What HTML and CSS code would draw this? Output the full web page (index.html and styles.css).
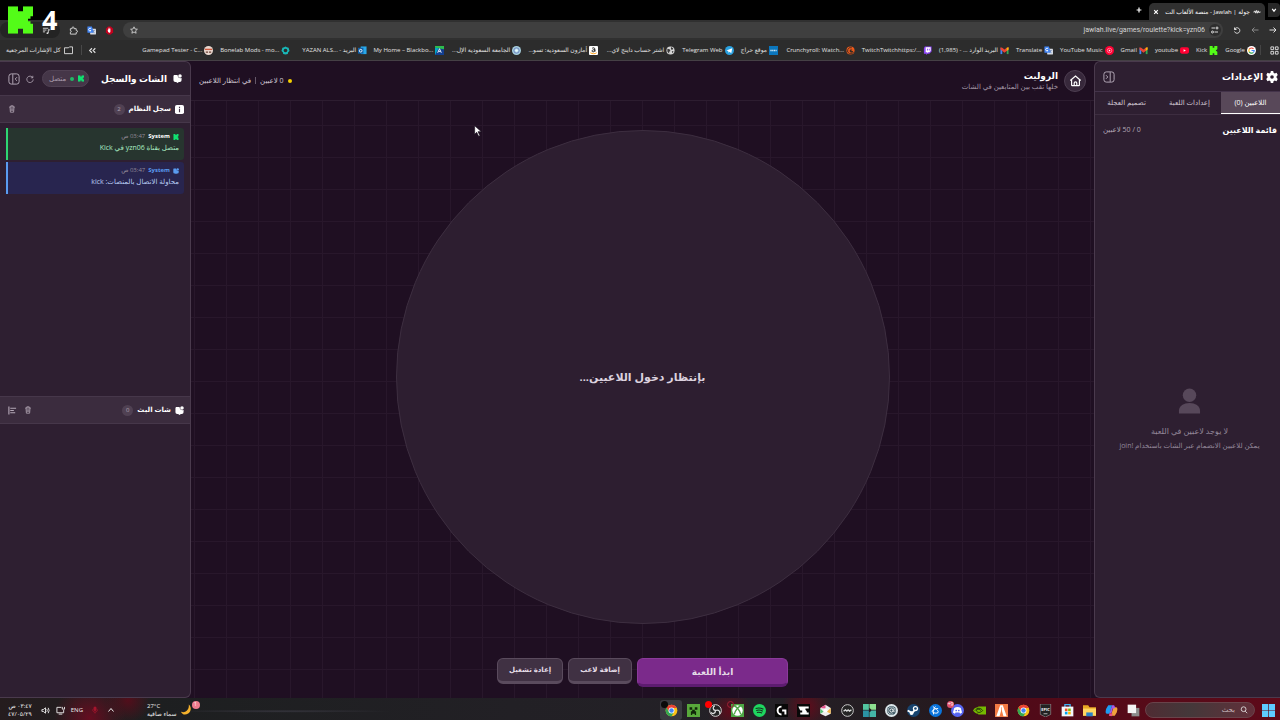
FILE: index.html
```html
<!DOCTYPE html>
<html lang="ar" dir="rtl">
<head>
    <meta charset="UTF-8">
    <meta name="viewport" content="width=device-width, initial-scale=1.0">
    <title>جولة | Jawlah</title>
    <link rel="stylesheet" href="styles.css">
</head>
<body>
    <svg class="sprite" aria-hidden="true">
        <symbol id="kick" viewBox="0 0 10 11"><path d="M0 0h4v2h2V0h4v4H9v1H8v1h1v1h1v4H6V9H4v2H0z"/></symbol>
        <symbol id="chat" viewBox="0 0 20 20"><path d="M2 2h8c1 6 4 8 9 7v5a4 4 0 0 1-4 4h-2l-3 2-3-2H5a4 4 0 0 1-4-4V5z"/><circle cx="15.500" cy="4.500" r="4"/></symbol>
        <symbol id="trash" viewBox="0 0 20 20"><path d="M3 5h14M7 5V2h6v3M5 5l1 13h8l1-13M8 8v7M12 8v7" fill="none" stroke="currentColor" stroke-width="2"/></symbol>
        <symbol id="gmail" viewBox="0 0 20 20"><path fill="#4285f4" d="M1 5h4v13H1z"/><path fill="#34a853" d="M15 5h4v13h-4z"/><path fill="#ea4335" d="M1 3l4 1 5 4 5-4 4-1v5l-9 7-9-7z"/><path fill="#fbbc04" d="M15 4l4-1v5l-4 3z"/></symbol>
        <symbol id="translate" viewBox="0 0 20 20"><rect x="7" y="6" width="13" height="13" rx="1" fill="#d5dae3"/><path fill="#4285f4" d="M1 1h10l4 14H1z"/><path d="M9 6a3 3 0 1 0 0 4H7" fill="none" stroke="#fff" stroke-width="2"/><path d="M12 10h6M15 9c0 3-1 5-3 6m1-4 4 5" stroke="#5876ad" fill="none"/></symbol>
        <symbol id="chrome" viewBox="0 0 20 20"><circle cx="10" cy="10" r="9" fill="#fbc116"/><path fill="#ea4335" d="M2.200 5.500A9 9 0 0 1 18 6H10L6 12z"/><path fill="#34a853" d="M2.200 5.500A9 9 0 0 0 10 19l4-7H6z"/><circle cx="10" cy="10" r="4.500" fill="#fff"/><circle cx="10" cy="10" r="3.400" fill="#4285f4"/></symbol>
        <symbol id="collapse" viewBox="0 0 20 20"><g fill="none" stroke="currentColor" stroke-width="1.600"><rect x="1.500" y="1.500" width="17" height="17" rx="4"/><path d="M12 2v16M5 7l3 3-3 3"/></g></symbol>
    </svg>

    <!-- شريط التبويبات -->
    <div class="tab-strip">
        <button class="tab-list" aria-label="التبويبات"><svg class="icon-xs" viewBox="0 0 10 10"><path d="M2 3l3 4 3-4" class="line"/></svg></button>
        <div class="browser-tab">
            <svg class="icon-s" viewBox="0 0 20 20"><path d="M1 10h3l1-3 2 6 2-7 2 7 2-6 2 5 1-2h3" class="line"/></svg>
            <span class="tab-title">جولة | Jawlah - منصة الألعاب الت</span>
            <button class="tab-close" aria-label="إغلاق"><svg class="icon-xs" viewBox="0 0 10 10"><path d="M2 2l6 6M8 2l-6 6" class="line"/></svg></button>
        </div>
        <button class="tab-new" aria-label="تبويب جديد"><svg class="icon-xs" viewBox="0 0 10 10"><path d="M5 1v8M1 5h8" class="line"/></svg></button>
    </div>

    <!-- شريط العنوان -->
    <div class="toolbar">
        <div class="nav">
            <button aria-label="رجوع"><svg class="icon-s" viewBox="0 0 16 16"><path d="M1 8h13M9 3l5 5-5 5" class="line"/></svg></button>
            <button class="dim" aria-label="تقدم"><svg class="icon-s" viewBox="0 0 16 16"><path d="M15 8H2M7 3L2 8l5 5" class="line"/></svg></button>
            <button aria-label="تحديث"><svg class="icon-s" viewBox="0 0 16 16"><path d="M3 3v4h4M3 7a5.500 5.500 0 1 1 0 4" class="line"/></svg></button>
        </div>
        <div class="address">
            <span class="site-info"><svg class="icon-s" viewBox="0 0 16 16"><path d="M1 4h7M14 12H7" class="line"/><circle cx="12" cy="4" r="2" class="line"/><circle cx="3" cy="12" r="2" class="line"/></svg></span>
            <input type="text" dir="ltr" aria-label="العنوان" value="jawlah.live/games/roulette?kick=yzn06">
            <button aria-label="إشارة"><svg class="icon-s" viewBox="0 0 20 20"><path d="M10 2l2.500 5.500 6 .6-4.500 4 1.300 6L10 15l-5.300 3.100 1.300-6-4.500-4 6-.6z" class="line"/></svg></button>
        </div>
        <div class="extensions">
            <svg class="icon-m" viewBox="0 0 20 20"><path d="M7 1h6l5 5v8l-5 5H7l-5-5V6z" fill="#c4001d"/><path d="M6 10l1-4 1 3V4h1v4l1-5 1 5 1-4v8c0 4-5 4-6-2z" fill="#fff"/></svg>
            <svg class="icon-m"><use href="#translate"/></svg>
            <svg class="icon-m" viewBox="0 0 20 20"><path d="M3 6h4V4a2 2 0 0 1 4 0v2h5v4h1a2 2 0 0 1 0 4h-1v4H3v-4a2 2 0 0 0 0-4z" class="line"/></svg>
            <span class="media-pill"><svg class="icon-m" viewBox="0 0 20 20"><path d="M2 5h12M2 9h8M2 13h5M14 8v8M14 8l4 1" class="line"/><circle cx="12" cy="16" r="2" fill="#ddd"/></svg></span>
        </div>
    </div>

    <!-- الإشارات المرجعية -->
    <nav class="bookmarks">
        <svg class="apps" viewBox="0 0 20 20"><g class="line"><path d="M2 2h6v6H2zM12 2h6v6h-6zM2 12h6v6H2zM12 12h6v6h-6z"/></g></svg>
        <a href="#" class="bookmark first"><svg viewBox="0 0 20 20"><circle cx="10" cy="10" r="10" fill="#fff"/><g fill="none" stroke-width="2.500"><path d="M14.500 6.500A6 6 0 0 0 5 7" stroke="#ea4335"/><path d="M5 7a6 6 0 0 0 0 6" stroke="#fbbc04"/><path d="M5 13a6 6 0 0 0 9 1.500" stroke="#34a853"/><path d="M14 14.500A6 6 0 0 0 16 10h-6" stroke="#4285f4"/></g></svg><span>Google</span></a>
        <a href="#" class="bookmark"><svg class="kick-green" viewBox="0 0 10 11"><use href="#kick"/></svg><span>Kick</span></a>
        <a href="#" class="bookmark"><svg viewBox="0 0 20 20"><rect y="3" width="20" height="14" rx="4" fill="#f03"/><path d="M8 7v6l5-3z" fill="#fff"/></svg><span>youtube</span></a>
        <a href="#" class="bookmark"><svg><use href="#gmail"/></svg><span>Gmail</span></a>
        <a href="#" class="bookmark"><svg viewBox="0 0 20 20"><circle cx="10" cy="10" r="10" fill="#f03"/><circle cx="10" cy="10" r="5" fill="none" stroke="#fff"/><path d="M8.500 7.500v5l4-2.500z" fill="#fff"/></svg><span>YouTube Music</span></a>
        <a href="#" class="bookmark"><svg><use href="#translate"/></svg><span>Translate</span></a>
        <a href="#" class="bookmark wide"><svg><use href="#gmail"/></svg><span>البريد الوارد ... - (1,985)</span></a>
        <a href="#" class="bookmark wide"><svg viewBox="0 0 20 20"><path d="M4 1h15v11l-5 5h-4l-3 3v-3H2V5z" fill="#8c45f7"/><path d="M6 3h11v8l-3 3h-3l-2 2v-2H6z" fill="#fff"/><path d="M10 6v4M14 6v4" stroke="#8c45f7" stroke-width="2"/></svg><span dir="ltr">TwitchTwitchhttps:/...</span></a>
        <a href="#" class="bookmark wide"><svg viewBox="0 0 20 20"><circle cx="10" cy="10" r="9" fill="#f05a1a"/><path d="M17 13a7 7 0 1 1-4-9" fill="none" stroke="#3a2a22" stroke-width="2"/><circle cx="12" cy="11" r="4" fill="#3a2a22"/><circle cx="14" cy="9" r="2" fill="#f05a1a"/></svg><span dir="ltr">Crunchyroll: Watch...</span></a>
        <a href="#" class="bookmark"><svg viewBox="0 0 20 20"><path fill="#0b76bd" d="M0 0h20v20H0z"/><path d="M3 10h14" stroke="#cde6f5" stroke-width="3" stroke-dasharray="3 1"/></svg><span>موقع حراج</span></a>
        <a href="#" class="bookmark"><svg viewBox="0 0 20 20"><circle cx="10" cy="10" r="10" fill="#2aa1e0"/><path d="M3 10l13-5-2 11-4-3-2 2-1-4z" fill="#fff"/></svg><span>Telegram Web</span></a>
        <a href="#" class="bookmark wide"><svg viewBox="0 0 20 20"><circle cx="10" cy="10" r="9" fill="#d6d6d6"/><path d="M3 6l5 1 2 4-3 2v4l-4-5zM11 2l5 3-2 4-3-2zM13 11l4 1-3 4z" fill="#393939"/></svg><span>اشتر حساب داينج لاي...</span></a>
        <a href="#" class="bookmark wide"><svg viewBox="0 0 20 20"><rect width="20" height="20" rx="2" fill="#fff"/><path d="M7 5c3-2 6-1 6 2v6M13 8c-8 0-7 5-4 5 2 0 4-2 4-4" fill="none" stroke="#111" stroke-width="2"/><path d="M3 15c5 3 10 3 14 0" stroke="#f90" stroke-width="2" fill="none"/></svg><span>أمازون السعودية: تسو...</span></a>
        <a href="#" class="bookmark wide"><svg viewBox="0 0 20 20"><circle cx="10" cy="10" r="10" fill="#a7d0de"/><circle cx="10" cy="10" r="6" fill="none" stroke="#6c7dc0" stroke-width="2"/><circle cx="10" cy="10" r="3" fill="#e9fbff"/></svg><span>الجامعة السعودية الإل...</span></a>
        <a href="#" class="bookmark wide"><svg viewBox="0 0 20 20"><path fill="#123e8f" d="M0 0h20v20H0z"/><path fill="#2dbd4e" d="M0 0h20v7L0 4z"/><path fill="#00a7c7" d="M0 4l8 1-8 15z"/><path d="M6 15l4-9 4 9M8 12h4" stroke="#fff" stroke-width="2" fill="none"/></svg><span dir="ltr">My Home – Blackbo...</span></a>
        <a href="#" class="bookmark wide"><svg viewBox="0 0 20 20"><path fill="#28a8ea" d="M6 1h13v17H6z"/><path fill="#0f5fa8" d="M0 4h12v13H0z"/><circle cx="6" cy="10.500" r="3" fill="none" stroke="#fff" stroke-width="2"/></svg><span>البريد - <bdi dir="ltr">YAZAN ALS...</bdi></span></a>
        <a href="#" class="bookmark wide"><svg viewBox="0 0 20 20"><path d="M10 1l3 2 4 1 1 4 1 3-3 3-1 4-5 1-5-1-1-4-3-3 1-3 1-4 4-1z" fill="#19b7b7"/><circle cx="10" cy="10" r="4" fill="#2c2c2c"/></svg><span dir="ltr">Bonelab Mods - mo...</span></a>
        <a href="#" class="bookmark wide"><svg viewBox="0 0 20 20"><circle cx="10" cy="10" r="10" fill="#e9d8cf"/><path d="M2 6h16v3H2z" fill="#cf5b3f"/><path d="M4 12h5v3H4zM11 12h5v3h-5z" fill="#6b4035"/></svg><span dir="ltr">Gamepad Tester - C...</span></a>
        <div class="bookmarks-end">
            <button class="more" aria-label="المزيد"><svg class="icon-s" viewBox="0 0 16 16"><path d="M7 4L3 8l4 4M13 4L9 8l4 4" class="line"/></svg></button>
            <a href="#" class="all-bookmarks"><svg viewBox="0 0 20 20"><path d="M1 4h9l2-2h7v15H1z" class="line"/></svg><span>كل الإشارات المرجعية</span></a>
        </div>
    </nav>

    <main class="game">
        <!-- الإعدادات -->
        <aside class="panel settings">
            <header class="settings-head">
                <svg class="icon-l" viewBox="0 0 20 20"><path fill="#fff" d="M8 0h4l.6 3 2 1 3-1 2 3.500L17.500 9v2l2 2.500-2 3.500-3-1-2 1-.5 3H8l-.6-3-2-1-3 1-2-3.500L2.500 11V9l-2-2.500 2-3.500 3 1 2-1z"/><circle cx="10" cy="10" r="3" fill="#2e1f31"/></svg>
                <h2>الإعدادات</h2>
                <button class="icon-btn push" aria-label="طي"><svg class="icon-l"><use href="#collapse"/></svg></button>
            </header>
            <div class="tabs">
                <button class="tab active">اللاعبين (0)</button>
                <button class="tab">إعدادات اللعبة</button>
                <button class="tab">تصميم العجلة</button>
            </div>
            <div class="players-head">
                <h3>قائمة اللاعبين</h3>
                <span class="count">0 / 50 لاعبين</span>
            </div>
            <div class="empty">
                <svg viewBox="0 0 24 26"><circle cx="12" cy="7" r="7"/><path d="M1 26v-3c0-5 5-8 11-8s11 3 11 8v3z"/></svg>
                <p>لا يوجد لاعبين في اللعبة</p>
                <p class="hint">يمكن للاعبين الانضمام عبر الشات باستخدام <bdi>join!</bdi></p>
            </div>
        </aside>

        <!-- العجلة -->
        <section class="board">
            <header class="board-head">
                <button class="home" aria-label="الرئيسية"><svg viewBox="0 0 20 20"><path d="M2 10l8-7 8 7M4 9v8a1 1 0 0 0 1 1h10a1 1 0 0 0 1-1V9M8 18v-4a2 2 0 0 1 4 0v4" fill="none" stroke="#fff" stroke-width="1.800"/></svg></button>
                <div class="board-title">
                    <h1>الروليت</h1>
                    <p>خلها تقب بين المتابعين في الشات</p>
                </div>
                <div class="board-status">
                    <span class="dot yellow"></span>
                    <span>0 لاعبين</span>
                    <span class="sep"></span>
                    <span>في انتظار اللاعبين</span>
                </div>
            </header>
            <div class="stage">
                <div class="wheel">بإنتظار دخول اللاعبين...</div>
            </div>
            <div class="actions">
                <button class="btn btn-start">ابدأ اللعبة</button>
                <button class="btn">إضافة لاعب</button>
                <button class="btn">إعادة تشغيل</button>
            </div>
        </section>

        <!-- الشات والسجل -->
        <aside class="panel chat">
            <header class="chat-head">
                <svg class="icon-m white"><use href="#chat"/></svg>
                <h2>الشات والسجل</h2>
                <span class="status-pill"><svg class="green" viewBox="0 0 10 11"><use href="#kick"/></svg><span class="dot green-dot"></span>متصل</span>
                <button class="icon-btn" aria-label="تحديث"><svg class="icon-s" viewBox="0 0 20 20"><path d="M17 2v5h-5M17 7a8 8 0 1 0 1 4" class="line"/></svg></button>
                <button class="icon-btn" aria-label="طي"><svg class="icon-l flip"><use href="#collapse"/></svg></button>
            </header>
            <div class="sub-head">
                <svg class="icon-m" viewBox="0 0 20 20"><rect width="20" height="20" rx="4" fill="#fff"/><path d="M10 4v3M10 9v7" stroke="#4a3a4c" stroke-width="2.500"/></svg>
                <h3>سجل النظام</h3>
                <span class="badge">2</span>
                <button class="icon-btn push" aria-label="مسح السجل"><svg class="icon-s"><use href="#trash"/></svg></button>
            </div>
            <div class="log">
                <article class="entry success">
                    <div class="meta"><svg viewBox="0 0 10 11"><use href="#kick"/></svg><b>System</b><time>03:47 ص</time></div>
                    <p>متصل بقناة yzn06 في Kick</p>
                </article>
                <article class="entry info">
                    <div class="meta"><svg viewBox="0 0 20 20"><use href="#chat"/></svg><b>System</b><time>03:47 ص</time></div>
                    <p>محاولة الاتصال بالمنصات: kick</p>
                </article>
            </div>
            <div class="sub-head">
                <svg class="icon-m white"><use href="#chat"/></svg>
                <h3>شات البث</h3>
                <span class="badge">0</span>
                <button class="icon-btn push" aria-label="مسح الشات"><svg class="icon-s"><use href="#trash"/></svg></button>
                <button class="icon-btn" aria-label="محاذاة"><svg class="icon-m" viewBox="0 0 20 20"><path d="M2 1v18M5 5h13M5 10h8M5 15h11" stroke="currentColor" stroke-width="2.500"/></svg></button>
            </div>
            <div class="log"></div>
        </aside>
    </main>

    <!-- شريط المهام -->
    <footer class="taskbar">
        <button class="app" aria-label="ابدأ"><svg viewBox="0 0 20 20"><path fill="#5ecbff" d="M0 0h9.500v9.500H0zM10.500 0H20v9.500h-9.500zM0 10.500h9.500V20H0zM10.500 10.500H20V20h-9.500z"/></svg></button>
        <label class="search"><svg class="icon-s" viewBox="0 0 20 20"><circle cx="9" cy="8" r="6" class="line"/><path d="M13 13l5 5" class="line"/></svg><input type="text" placeholder="بحث" aria-label="بحث"></label>
        <button class="app" aria-label="عرض المهام"><svg viewBox="0 0 20 20"><path fill="#8b8b8b" d="M7 6h12v13H7z"/><path fill="#f4f4f4" d="M1 1h13v13H1z"/></svg></button>
        <button class="app" aria-label="Copilot"><svg viewBox="0 0 20 20"><path fill="#1e9bf0" d="M5 2h6l-4 13H3c-3 0-2-5-1-8z"/><path fill="#f2a33c" d="M15 18H9l4-13h4c3 0 2 5 1 8z"/><path fill="#a45bea" d="M11 2h3l2 4-4 1-2 7H7z"/><path fill="#e8508c" d="M7 14l5 1-2 4-4-1z"/></svg></button>
        <button class="app" aria-label="الملفات"><svg viewBox="0 0 20 20"><path fill="#e9a824" d="M0 2h8l2 3h10v13H0z"/><path fill="#ffd762" d="M0 7h20v11H0z"/><path fill="#2a82c9" d="M5 13h10v6H5z"/></svg></button>
        <button class="app" aria-label="المتجر"><svg viewBox="0 0 20 20"><path d="M6 5V1h8v4" fill="none" stroke="#3eb2f2" stroke-width="2"/><path fill="#f2f7fa" d="M1 4h18v15H1z"/><path fill="#f25022" d="M6 7h4v4H6z"/><path fill="#7fba00" d="M11 7h4v4h-4z"/><path fill="#00a4ef" d="M6 12h4v4H6z"/><path fill="#ffb900" d="M11 12h4v4h-4z"/></svg></button>
        <button class="app" aria-label="Epic Games"><svg viewBox="0 0 20 20"><path fill="#222" stroke="#ddd" stroke-width=".6" d="M2 0h16v16l-8 4-8-4z"/><text x="10" y="10" text-anchor="middle" class="epic">EPIC</text><path d="M7 15h6" stroke="#fff"/></svg></button>
        <button class="app" aria-label="Chrome"><svg><use href="#chrome"/></svg></button>
        <button class="app" aria-label="FiveM"><svg viewBox="0 0 20 20"><path fill="#f47b45" d="M0 0h20v20H0z"/><path fill="#fff" d="M8 2h4l6 17h-5L10 8l-3 11H2z"/><path d="M10 5v12" stroke="#f47b45"/></svg></button>
        <button class="app" aria-label="NVIDIA"><svg viewBox="0 0 20 20"><path fill="#76b900" d="M8 4h12v12H8zM0 10c3-5 6-5 8-5v10c-4 0-6-2-8-5z"/><path d="M3 10c4-5 9-4 12 0-4 4-8 4-10 0 3-3 5-2 7 0" fill="none" stroke="#243b09" stroke-width="1.500"/></svg></button>
        <button class="app" aria-label="Discord"><svg viewBox="0 0 20 20"><circle cx="10" cy="10" r="10" fill="#5865f2"/><path fill="#fff" d="M5 6c3-2 7-2 10 0l2 7-3 2-1-2H7l-1 2-3-2z"/><circle cx="8" cy="10" r="1.300" fill="#5865f2"/><circle cx="12" cy="10" r="1.300" fill="#5865f2"/></svg><span class="alert">9+</span></button>
        <button class="app" aria-label="Battle.net"><svg viewBox="0 0 20 20"><circle cx="10" cy="10" r="10" fill="#0a74dc"/><path d="M6 4c6 4 9 7 8 9s-8 1-9-1 3-5 9-5M7 16c-1-6 1-11 3-12" fill="none" stroke="#fff" stroke-width="1.500"/></svg></button>
        <button class="app" aria-label="Steam"><svg viewBox="0 0 20 20"><circle cx="10" cy="10" r="10" fill="#17436e"/><path d="M1 10l7 4 5-6" stroke="#fff" stroke-width="3" fill="none"/><circle cx="13" cy="7" r="4" fill="#fff"/><circle cx="13" cy="7" r="2" fill="#17436e"/><circle cx="7" cy="14" r="3" fill="#fff"/></svg></button>
        <button class="app" aria-label="البريد"><svg viewBox="0 0 20 20"><circle cx="10" cy="10" r="10" fill="#dce6ea"/><circle cx="10" cy="10" r="7" fill="#34505d"/><circle cx="10" cy="10" r="2.500" fill="none" stroke="#fff" stroke-width="1.500"/><path d="M12.500 7v4c1 3 3 1 3-1a5.500 5.500 0 1 0-3 5" fill="none" stroke="#fff"/></svg></button>
        <button class="app" aria-label="الأدوات"><svg viewBox="0 0 20 20"><path fill="#52c6a0" d="M0 0h9v9H0z"/><path fill="#8ddf90" d="M10 0h10v9H13l-3-3z"/><path fill="#2b93a4" d="M0 10h9v10H0z"/><path fill="#44b6a8" d="M10 13l3-3h7v10H10z"/></svg></button>
        <button class="app" aria-label="الصوت"><svg viewBox="0 0 20 20"><circle cx="10" cy="10" r="9" fill="#242424" stroke="#ccc" stroke-width="1.500"/><path d="M4 11l3-2 2 2 2-2 2 2 3-2" stroke="#ddd" stroke-width="2" fill="none"/></svg></button>
        <button class="app" aria-label="الكاميرا"><svg viewBox="0 0 20 20"><path fill="#eee" d="M10 1l8 5v9l-8 4-8-4V6z"/><path fill="#e8508c" d="M2 6l8-5v6z"/><path fill="#f5b748" d="M18 6v9l-6-3z"/><path fill="#56c176" d="M2 15V7l5 5z"/><circle cx="10" cy="10" r="3" fill="#fff"/></svg></button>
        <button class="app" aria-label="CapCut"><svg viewBox="0 0 20 20"><path fill="#080808" d="M0 0h20v20H0z"/><path fill="#fff" d="M2 4h16v3h-5v2l2 2v2h3v3H5v-3h3v-3H5z"/></svg></button>
        <button class="app" aria-label="Logitech"><svg viewBox="0 0 20 20"><path fill="#080808" d="M0 0h20v20H0z"/><path d="M10 4a6 6 0 1 0 0 12M11 10h5v6" fill="none" stroke="#fff" stroke-width="3"/></svg></button>
        <button class="app" aria-label="Spotify"><svg viewBox="0 0 20 20"><circle cx="10" cy="10" r="10" fill="#1ed760"/><path d="M4 7q6-2 12 1M5 10q5-2 10 1M6 13q4-1 8 1" stroke="#16301e" stroke-width="1.800" fill="none"/></svg></button>
        <button class="app" aria-label="Xbox"><svg viewBox="0 0 20 20"><path fill="#4da645" d="M0 0h20v20H0z"/><circle cx="10" cy="10" r="8" fill="#fff"/><path d="M5 3q7 3 10 13M15 3Q8 6 5 16" fill="none" stroke="#4da645" stroke-width="2"/></svg><span class="alert ring"></span></button>
        <button class="app" aria-label="OBS"><svg viewBox="0 0 20 20"><circle cx="10" cy="10" r="9" fill="#242424" stroke="#d5d5d5" stroke-width="1.500"/><path d="M10 10c-5-1-4-6-1-7M10 10c5-2 8 2 6 5M10 10c0 5-5 6-7 3" fill="none" stroke="#ddd" stroke-width="2"/></svg><span class="alert solid"></span></button>
        <button class="app" aria-label="Minecraft"><svg viewBox="0 0 20 20"><path fill="#58a83b" d="M0 0h20v20H0z"/><path fill="#102409" d="M4 5h4v4H4zM12 5h4v4h-4zM8 9h4v2h2v6h-2v-2H8v2H6v-6h2z"/></svg></button>
        <button class="app current" aria-label="Chrome"><svg><use href="#chrome"/></svg><span class="alert dark"></span></button>

        <div class="weather">
            <span class="moon"><svg viewBox="0 0 20 20"><path fill="#f5b22c" d="M13 1c5 4 4 12-1 15S2 18 0 13c8 3 14-4 13-12z"/></svg><span class="alert pink">1</span></span>
            <div class="weather-text"><span dir="ltr">27°C</span><span>سماء صافية</span></div>
        </div>
        <div class="tray">
            <svg class="icon-s" viewBox="0 0 16 16"><path d="M3 11l5-6 5 6" class="line"/></svg>
            <svg class="icon-s mic" viewBox="0 0 16 16"><rect x="5" y="1" width="6" height="9" rx="3" fill="#a5142c"/><path d="M3 7c0 7 10 7 10 0M8 12v3" fill="none" stroke="#a5142c" stroke-width="1.500"/></svg>
            <span class="lang">ENG</span>
            <svg class="icon-m" viewBox="0 0 20 20"><path d="M12 3H2v12h15V9M6 18h8M14 2v5h5V2" class="line"/></svg>
            <svg class="icon-m" viewBox="0 0 20 20"><path d="M2 8h3l5-4v12l-5-4H2zM13 7q2 3 0 6M16 4q4 6 0 12" class="line"/></svg>
            <div class="clock"><span>٠٣:٤٧ ص</span><span>٤٧/٠٥/٢٩</span></div>
        </div>
    </footer>

    <div class="overlay">
        <svg viewBox="0 0 10 11"><use href="#kick"/></svg>
        <strong>4</strong>
    </div>
    <svg class="cursor" viewBox="0 0 12 18"><path d="M1 1v13l3-3 3 6 2-1-3-6h5z" fill="#fff" stroke="#1a1020"/></svg>
</body>
</html>
```

FILE: styles.css
```css
* {
    box-sizing: border-box;
}

body {
    margin: 0;
    height: 100vh;
    display: flex;
    flex-direction: column;
    overflow: hidden;
    background: #1f0f22;
    color: #fff;
    font-family: "Open Sans", "DejaVu Sans", sans-serif;
    font-size: 7px;
    line-height: 10px;
}

h1, h2, h3, p {
    margin: 0;
}

button, input {
    font: inherit;
    color: inherit;
    background: none;
    border: none;
    padding: 0;
}

button {
    cursor: pointer;
    display: flex;
    align-items: center;
    justify-content: center;
}

a {
    color: inherit;
    text-decoration: none;
}

svg {
    display: block;
    flex: none;
    fill: currentColor;
}

.sprite {
    position: absolute;
    width: 0;
    height: 0;
}

.line {
    fill: none;
    stroke: currentColor;
    stroke-width: 2;
}

.icon-xs { width: 6px; height: 6px; }
.icon-s { width: 8px; height: 8px; }
.icon-m { width: 9px; height: 9px; }
.icon-l { width: 12px; height: 12px; }

.white { color: #fff; }
.kick-green { color: #53fc18; }
.push { margin-right: auto; }

/* المتصفح */
.tab-strip {
    display: flex;
    align-items: flex-end;
    height: 20px;
    background: #000;
}

.tab-list {
    width: 12px;
    height: 14px;
    margin-bottom: 3px;
    background: #282828;
    border-radius: 0 4px 4px 0;
}

.browser-tab {
    display: flex;
    align-items: center;
    gap: 3px;
    width: 116px;
    height: 17px;
    margin-right: 3px;
    padding: 0 4px;
    background: #303030;
    border-radius: 5px 5px 0 0;
    font-size: 6px;
}

.tab-title {
    flex: 1;
    white-space: nowrap;
}

.tab-new {
    width: 20px;
    height: 20px;
}

.toolbar {
    display: flex;
    align-items: center;
    height: 20px;
    background: #303030;
    color: #ddd;
}

.nav {
    display: flex;
    gap: 10px;
    padding: 0 3px 0 10px;
}

.dim {
    color: #888;
}

.address {
    flex: 1;
    display: flex;
    align-items: center;
    gap: 4px;
    height: 16px;
    padding: 0 2px 0 7px;
    background: #3f3f3f;
    border-radius: 8px;
}

.site-info {
    display: flex;
    align-items: center;
    justify-content: center;
    width: 12px;
    height: 12px;
    border-radius: 6px;
    background: #2d2d2d;
}

.address input {
    flex: 1;
    text-align: right;
    color: #d5d5d5;
    font-family: Roboto, sans-serif;
}

.extensions {
    display: flex;
    align-items: center;
    gap: 9px;
    padding-right: 9px;
}

.media-pill {
    display: flex;
    align-items: center;
    width: 60px;
    height: 16px;
    padding-right: 9px;
    background: #242424;
    border-radius: 8px;
}

.bookmarks {
    display: flex;
    align-items: center;
    height: 21px;
    padding-right: 1px;
    background: #2c2c2c;
    border-bottom: 1px solid #454045;
    color: #e2e2e2;
    font-size: 6px;
    white-space: nowrap;
}

.bookmarks svg {
    width: 9px;
    height: 9px;
}

.bookmark {
    display: flex;
    align-items: center;
    gap: 2px;
    margin-left: 7px;
}

.bookmark.first {
    margin-right: 9px;
    padding-right: 4px;
    border-right: 1px solid #444;
}

.bookmark.wide {
    width: 70px;
}

.bookmarks-end {
    display: flex;
    align-items: center;
    gap: 6px;
    margin-right: auto;
    padding-left: 6px;
}

.all-bookmarks {
    display: flex;
    align-items: center;
    gap: 3px;
    padding-right: 8px;
    border-right: 1px solid #484848;
}

/* اللعبة */
.game {
    flex: 1;
    display: flex;
    min-height: 0;
}

.panel {
    display: flex;
    flex-direction: column;
    background: #2e1f31;
    border: 1px solid #4a3a4d;
}

.settings {
    width: 186px;
    border-right: none;
    border-radius: 6px 0 0 6px;
}

.settings-head {
    display: flex;
    align-items: center;
    gap: 3px;
    height: 30px;
    padding: 0 2px 0 8px;
    border-bottom: 1px solid #43334a;
}

h2 {
    font-size: 9px;
    line-height: 12px;
    white-space: nowrap;
}

.icon-btn {
    color: #b5a9b8;
}

.tabs {
    display: grid;
    grid-template-columns: 59px 1fr 1fr;
    height: 23px;
    border-bottom: 1px solid #3d2d40;
}

.tab {
    color: #cfc5d1;
    white-space: nowrap;
}

.tab.active {
    background: #584859;
    color: #fff;
    border-bottom: 1px solid #fff;
}

.players-head {
    display: flex;
    align-items: center;
    justify-content: space-between;
    padding: 9px 3px 9px 8px;
}

h3 {
    font-size: 8px;
    line-height: 12px;
}

.count {
    color: #b3a8b5;
}

.empty {
    flex: 1;
    display: flex;
    flex-direction: column;
    align-items: center;
    justify-content: center;
    gap: 5px;
    color: #94889a;
    font-size: 8px;
    padding: 0 0 4px 4px;
}

.empty svg {
    width: 23px;
    height: 26px;
    margin-bottom: 7px;
    color: #57485a;
}

.empty .hint {
    font-size: 7px;
}

.board {
    flex: 1;
    display: flex;
    flex-direction: column;
    background-color: #1f0f22;
    background-image: linear-gradient(to right, #28172b 1px, transparent 1px), linear-gradient(to bottom, #28172b 1px, transparent 1px);
    background-size: 32px 32px;
    background-position: 3px 0;
}

.board-head {
    display: flex;
    align-items: center;
    gap: 6px;
    height: 40px;
    padding: 0 8px;
    background: #1f0f22;
    border-bottom: 1px solid #2d1d30;
}

.home {
    width: 22px;
    height: 22px;
    background: #37283b;
    border: 1px solid #4d3e51;
    border-radius: 50%;
}

.home svg {
    width: 13px;
    height: 13px;
}

h1 {
    font-size: 9px;
    line-height: 12px;
}

.board-title p {
    color: #a498a7;
}

.board-status {
    display: flex;
    align-items: center;
    gap: 4px;
    margin-right: auto;
    color: #d3cad5;
}

.dot {
    width: 4px;
    height: 4px;
    border-radius: 50%;
}

.yellow {
    background: #f5d000;
}

.sep {
    width: 1px;
    height: 7px;
    background: #66596a;
}

.stage {
    flex: 1;
    min-height: 0;
    display: flex;
    justify-content: center;
    padding: 29px 0 34px;
}

.wheel {
    display: flex;
    align-items: center;
    justify-content: center;
    height: 100%;
    aspect-ratio: 1;
    background: #2d1e30;
    border: 1px solid #3d2e40;
    border-radius: 50%;
    color: #dcd2df;
    font-size: 11px;
    font-weight: bold;
}

.actions {
    display: flex;
    justify-content: center;
    align-items: flex-start;
    gap: 5px;
    padding-bottom: 11px;
}

.btn {
    height: 26px;
    padding: 0 11px;
    background: #403143;
    border: 1px solid #5a4b5d;
    border-bottom: 3px solid #5a4b5d;
    border-radius: 6px;
    color: #e5dde7;
    font-size: 7px;
    font-weight: bold;
}

.btn-start {
    width: 151px;
    height: 29px;
    background: #7b2a8b;
    border-color: #8b3a9b;
    border-bottom-color: #5d1c70;
    font-size: 9px;
}

/* الشات */
.chat {
    width: 191px;
    border-left: none;
    border-radius: 0 6px 6px 0;
}

.chat-head {
    display: flex;
    align-items: center;
    height: 33px;
    padding: 0 8px;
    gap: 6px;
}

.status-pill {
    display: flex;
    align-items: center;
    gap: 4px;
    height: 17px;
    margin: 0 auto 0 2px;
    padding: 0 4px 0 6px;
    background: #453648;
    border: 1px solid #504153;
    border-radius: 9px;
    color: #a99cac;
}

.status-pill svg {
    width: 6px;
    height: 7px;
}

.green {
    color: #10e070;
}

.green-dot {
    background: #22b866;
}

.flip {
    transform: scaleX(-1);
}

.sub-head {
    display: flex;
    align-items: center;
    gap: 4px;
    height: 28px;
    padding: 0 6px 0 8px;
    background: #3b2c3e;
    border-top: 1px solid #46374a;
    border-bottom: 1px solid #46374a;
}

.sub-head h3 {
    font-size: 7px;
}

.sub-head .icon-btn + .icon-btn {
    margin-right: 3px;
}

.badge {
    width: 11px;
    height: 11px;
    background: #504153;
    border-radius: 50%;
    color: #b0a5b3;
    font-size: 6px;
    line-height: 11px;
    text-align: center;
}

.log {
    flex: 1;
    display: flex;
    flex-direction: column;
    gap: 2px;
    padding: 5px 6px;
}

.entry {
    height: 32px;
    padding: 4px 5px;
    border-left: 2px solid;
    border-radius: 0 3px 3px 0;
}

.entry p {
    line-height: 14px;
}

.meta {
    display: flex;
    align-items: center;
    gap: 3px;
    font-size: 6px;
    line-height: 9px;
}

.meta svg {
    width: 6px;
    height: 6px;
}

.meta time {
    color: #968a99;
}

.success {
    background: #27352f;
    border-color: #2ed573;
    color: #a9ecc2;
}

.success svg {
    color: #10e070;
}

.success b {
    color: #fff;
}

.info {
    background: #28254f;
    border-color: #5a9cf0;
    color: #b9cdf5;
}

.info svg, .info b {
    color: #5a9cf0;
}

/* شريط المهام */
.taskbar {
    display: flex;
    align-items: center;
    height: 22px;
    padding: 2px 1px 0 0;
    background:
        radial-gradient(circle at 7% 90%, #650d20, transparent 3%),
        radial-gradient(circle at 10% 10%, #520e1b, transparent 2%),
        radial-gradient(ellipse at 22% 60%, #35343d, transparent 8%),
        radial-gradient(circle at 57% 60%, #5d0b1b, transparent 3%),
        radial-gradient(circle at 63% 40%, #600b1b, transparent 3%),
        linear-gradient(to right, #251c1e, #1d1f20 12%, #222025 40%, #242127 60%, #251a1f 73%, #500a18 80%, #5d0a19 100%);
    color: #eee;
}

.app {
    position: relative;
    width: 22px;
    height: 20px;
}

.app svg {
    width: 13px;
    height: 13px;
}

.app.current {
    background: #3a3a40;
    border-radius: 3px;
}

.epic {
    fill: #fff;
    font: bold 6px "Open Sans", sans-serif;
}

.alert {
    position: absolute;
    top: 1px;
    left: 1px;
    min-width: 7px;
    height: 7px;
    border-radius: 4px;
    background: #e0526b;
    color: #fff;
    font-size: 5px;
    line-height: 7px;
    text-align: center;
}

.alert.ring {
    background: none;
    border: 1px solid #a02035;
}

.alert.solid {
    background: #f00;
}

.alert.dark {
    background: #0a0a0a;
}

.search {
    display: flex;
    align-items: center;
    gap: 5px;
    width: 110px;
    height: 16px;
    margin: 0 2px 0 1px;
    padding: 0 6px;
    background: linear-gradient(to right, #4f2c33, #44383a 40%, #62303a);
    border: 1px solid #69434a;
    border-radius: 8px;
}

.search input {
    flex: 1;
    min-width: 0;
}

.search input::placeholder {
    color: #cbb9bd;
}

.weather {
    display: flex;
    align-items: center;
    gap: 4px;
    margin-right: auto;
}

.moon {
    position: relative;
    padding-right: 8px;
}

.moon svg {
    width: 12px;
    height: 12px;
}

.alert.pink {
    top: -3px;
    left: 11px;
    min-width: 8px;
    height: 8px;
    background: #ef7c8e;
}

.weather-text, .clock {
    display: flex;
    flex-direction: column;
    font-size: 6px;
    line-height: 8px;
    white-space: nowrap;
}

.tray {
    display: flex;
    align-items: center;
    gap: 6px;
    width: 115px;
    margin-right: 32px;
    font-size: 6px;
}

.mic {
    margin: 0 2px;
}

.clock {
    margin-right: auto;
    padding-left: 8px;
}

/* طبقة البث */
.overlay {
    position: absolute;
    top: 6px;
    left: 8px;
    display: flex;
    flex-direction: row-reverse;
    align-items: center;
    gap: 9px;
}

.overlay svg {
    width: 25px;
    height: 28px;
    color: #53fc18;
}

.overlay strong {
    font-size: 27px;
    line-height: 28px;
}

.cursor {
    position: absolute;
    top: 125px;
    left: 474px;
    width: 8px;
    height: 12px;
}
```
